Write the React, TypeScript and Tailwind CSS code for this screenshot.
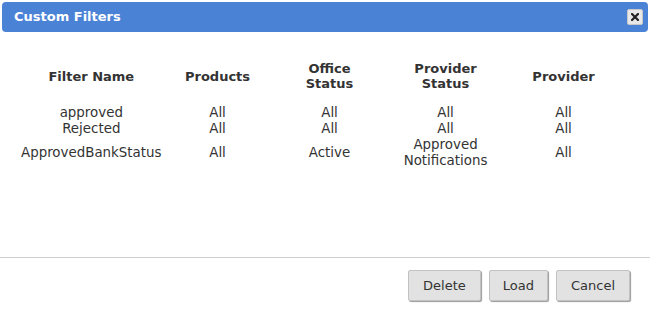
const rows = [
  { name: "approved", products: "All", office: "All", providerStatus: ["All"], provider: "All" },
  { name: "Rejected", products: "All", office: "All", providerStatus: ["All"], provider: "All" },
  {
    name: "ApprovedBankStatus",
    products: "All",
    office: "Active",
    providerStatus: ["Approved", "Notifications"],
    provider: "All",
  },
];

const CustomFilters = () => {
  return (
    <div className="w-[650px] h-[315px] bg-white flex flex-col font-['DejaVu_Sans',Verdana,sans-serif] text-[13px] text-[#333]">
      {/* title bar */}
      <div className="mx-[2px] mt-[2px] h-[30px] rounded-[4px] bg-[#4a82d6] flex items-center justify-between pl-[12px] pr-[5px]">
        <span className="text-white font-bold text-[13px]">Custom Filters</span>
        <button className="w-[16px] h-[16px] bg-[#e8e8e8] border border-[#c8c8c8] rounded-[2px] flex items-center justify-center">
          <svg width="8" height="8" viewBox="0 0 8 8">
            <path d="M1 1L7 7M7 1L1 7" stroke="#222" strokeWidth="2.2" strokeLinecap="square" />
          </svg>
        </button>
      </div>

      {/* table */}
      <div className="pt-[29px] pl-[21px]">
        <table className="border-collapse text-center leading-[16px] text-[13.4px]">
          <thead>
            <tr className="font-bold leading-[15px] text-[13px]">
              <th className="w-[140px] p-0 pb-[14px] align-middle">Filter Name</th>
              <th className="w-[112px] p-0 pb-[14px] align-middle">Products</th>
              <th className="w-[112px] p-0 pb-[14px] align-middle">
                Office
                <br />
                Status
              </th>
              <th className="w-[120px] p-0 pb-[14px] align-middle">
                Provider
                <br />
                Status
              </th>
              <th className="w-[116px] p-0 pb-[14px] align-middle">Provider</th>
            </tr>
          </thead>
          <tbody>
            {rows.map((r) => (
              <tr key={r.name}>
                <td className="p-0 align-middle">{r.name}</td>
                <td className="p-0 align-middle">{r.products}</td>
                <td className="p-0 align-middle">{r.office}</td>
                <td className="p-0 align-middle">
                  {r.providerStatus.map((l) => (
                    <div key={l}>{l}</div>
                  ))}
                </td>
                <td className="p-0 align-middle">{r.provider}</td>
              </tr>
            ))}
          </tbody>
        </table>
      </div>

      {/* footer */}
      <div className="mt-auto border-t border-[#cfcfcf] pt-[12px] pb-[14px] pr-[20px] flex justify-end gap-[8px]">
        <button className="h-[31px] px-[14px] bg-[#e2e2e2] border border-[#c2c2c2] rounded-[2px] shadow-[1px_1px_1px_#9a9a9a] text-[#333]">
          Delete
        </button>
        <button className="h-[31px] px-[13px] bg-[#e2e2e2] border border-[#c2c2c2] rounded-[2px] shadow-[1px_1px_1px_#9a9a9a] text-[#333]">
          Load
        </button>
        <button className="h-[31px] px-[14px] bg-[#e2e2e2] border border-[#c2c2c2] rounded-[2px] shadow-[1px_1px_1px_#9a9a9a] text-[#333]">
          Cancel
        </button>
      </div>
    </div>
  );
};

export default function App() {
  return <CustomFilters />;
}
